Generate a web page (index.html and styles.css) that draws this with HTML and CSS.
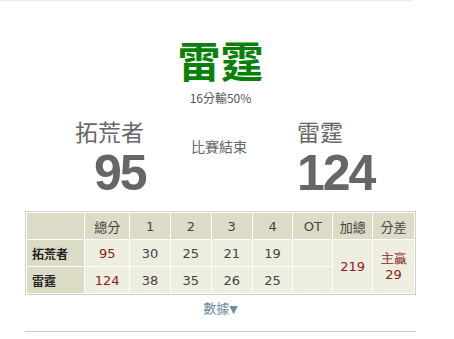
FILE: index.html
```html
<!DOCTYPE html>
<html lang="zh-Hant">
<head>
<meta charset="utf-8">
<link rel="stylesheet" href="styles.css">
</head>
<body>
<div class="topline"></div>
<main class="game">
  <h1 class="winner">雷霆</h1>
  <div class="margin">16分輸50%</div>
  <div class="scoreboard">
    <div class="team team-away">
      <div class="team-name">拓荒者</div>
      <div class="team-score away-score">95</div>
    </div>
    <div class="status">比賽結束</div>
    <div class="team team-home">
      <div class="team-name">雷霆</div>
      <div class="team-score home-score">124</div>
    </div>
  </div>
  <table class="box">
    <tr class="head">
      <th class="c-team"></th>
      <th class="c-total">總分</th>
      <th class="c-q">1</th>
      <th class="c-q">2</th>
      <th class="c-q">3</th>
      <th class="c-q">4</th>
      <th class="c-ot">OT</th>
      <th class="c-sum">加總</th>
      <th class="c-diff">分差</th>
    </tr>
    <tr>
      <th class="rowname">拓荒者</th>
      <td class="red">95</td>
      <td>30</td>
      <td>25</td>
      <td>21</td>
      <td>19</td>
      <td></td>
      <td class="red" rowspan="2">219</td>
      <td class="red diff" rowspan="2">主贏<br>29</td>
    </tr>
    <tr>
      <th class="rowname">雷霆</th>
      <td class="red">124</td>
      <td>38</td>
      <td>35</td>
      <td>26</td>
      <td>25</td>
      <td></td>
    </tr>
  </table>
  <div class="more">數據<span class="arrow">▼</span></div>
  <div class="bottomline"></div>
</main>
</body>
</html>
```

FILE: styles.css
```css
html, body {
  margin: 0;
  padding: 0;
  background: #fff;
}
body {
  width: 454px;
  height: 339px;
  overflow: hidden;
  font-family: "Noto Sans CJK TC", "DejaVu Sans", sans-serif;
  color: #666;
}
.topline {
  width: 413px;
  height: 1px;
  background: #ececec;
}
.game {
  width: 391px;
  margin-left: 25px;
  display: flex;
  flex-direction: column;
}
.winner {
  margin: 35px 0 0 0;
  font-size: 43px;
  line-height: 46px;
  font-weight: 700;
  color: #0a7f0a;
  text-align: center;
}
.margin {
  margin-top: 8px;
  font-size: 12px;
  line-height: 15px;
  color: #555;
  text-align: center;
}
.scoreboard {
  display: flex;
  padding-left: 50px;
  margin-top: 12px;
}
.team {
  display: flex;
  flex-direction: column;
}
.team-away { width: 116px; }
.status {
  width: 106px;
  font-size: 14px;
  line-height: 18px;
  padding-top: 20px;
  color: #666;
}
.team-name {
  font-size: 23px;
  line-height: 28px;
  color: #666;
}
.team-score {
  font-family: "Liberation Sans", Arial, sans-serif;
  font-weight: 700;
  font-size: 50px;
  line-height: 50px;
  letter-spacing: -2px;
  color: #666;
  margin-top: 3px;
}
.away-score { margin-left: 19px; }
.home-score { margin-left: 0; }
.box {
  margin-top: 13px;
  width: 391px;
  border: 1px solid #cfcfc8;
  border-collapse: separate;
  border-spacing: 1px;
  background: #fff;
  table-layout: fixed;
}
.box th, .box td {
  padding: 0;
  text-align: center;
  font-weight: normal;
  font-size: 13px;
  color: #444;
  height: 26px;
}
.box td {
  background: #ededE0;
  font-family: "DejaVu Sans", sans-serif;
  font-size: 13px;
}
.box .head th {
  background: #dcdcc6;
  height: 26px;
  font-size: 13px;
}
.box .head th.c-q, .box .head th.c-ot {
  font-family: "DejaVu Sans", sans-serif;
}
.c-team { width: 56px; }
.c-total { width: 43px; }
.c-q { width: 39px; }
.c-ot { width: 38px; }
.c-sum { width: 38px; }
.c-diff { width: 40px; }
.box .rowname {
  background: #dcdcc6;
  text-align: left;
  padding-left: 5px;
  font-weight: 700;
  font-size: 12px;
  color: #222;
}
.box td.red {
  color: #8b1c1c;
}
.box td.diff {
  font-size: 13px;
  line-height: 16px;
}
.more {
  margin-top: 4px;
  text-align: center;
  font-size: 13px;
  line-height: 17px;
  color: #6f8ca3;
}
.arrow {
  font-family: "DejaVu Sans", sans-serif;
  font-size: 11px;
}
.bottomline {
  margin-top: 13px;
  height: 1px;
  background: #c8c8c8;
}
```
